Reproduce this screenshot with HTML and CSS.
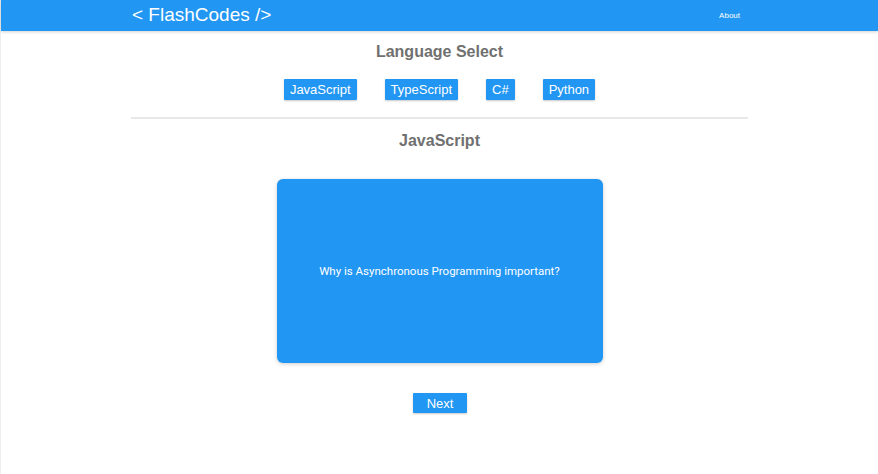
FILE: index.html
```html
<!DOCTYPE html>
<html>
<head>
<meta charset="utf-8">
<link rel="stylesheet" href="styles.css">
</head>
<body>
<div class="page">
  <header class="topbar">
    <div class="topbar-inner">
      <div class="brand">&lt; FlashCodes /&gt;</div>
      <a class="nav-link">About</a>
    </div>
  </header>
  <main class="container">
    <h2 class="section-title">Language Select</h2>
    <div class="lang-row">
      <button class="btn">JavaScript</button>
      <button class="btn">TypeScript</button>
      <button class="btn">C#</button>
      <button class="btn">Python</button>
    </div>
    <div class="divider"></div>
    <h2 class="section-title second">JavaScript</h2>
    <div class="card-wrap">
      <div class="card">Why is Asynchronous Programming important?</div>
    </div>
    <div class="next-row">
      <button class="btn btn-next">Next</button>
    </div>
  </main>
</div>
</body>
</html>
```

FILE: styles.css
```css
html, body {
  margin: 0;
  padding: 0;
  background: #fff;
}
body {
  font-family: "Liberation Sans", Arial, sans-serif;
}
.page {
  min-height: 474px;
  border-left: 1px solid #eeeeee;
  box-sizing: border-box;
}
.topbar {
  height: 31px;
  background: #2196f3;
  box-shadow: 0 1px 3px rgba(0, 0, 0, 0.18);
}
.topbar-inner {
  width: 617px;
  height: 31px;
  margin: 0 auto;
  display: flex;
  align-items: center;
  justify-content: space-between;
  padding: 0 8px 0 1px;
  box-sizing: border-box;
  color: #fff;
}
.brand {
  font-size: 19px;
  line-height: 22px;
  position: relative;
  top: -1px;
}
.nav-link {
  font-size: 8px;
  color: #fff;
}
.container {
  width: 617px;
  margin: 0 auto;
  text-align: center;
}
.section-title {
  margin: 0;
  font-size: 16px;
  line-height: 18px;
  font-weight: bold;
  color: #707070;
  padding-top: 12px;
}
.section-title.second {
  padding-top: 13px;
}
.lang-row {
  display: flex;
  justify-content: center;
  gap: 28px;
  margin-top: 18px;
}
.btn {
  background: #2196f3;
  color: #fff;
  border: none;
  border-radius: 1px;
  font-family: "Liberation Sans", Arial, sans-serif;
  font-size: 13px;
  height: 21px;
  padding: 0 6px;
  box-shadow: 0 1px 2px rgba(0, 0, 0, 0.22);
  cursor: pointer;
}
.divider {
  height: 2px;
  background: #e8e8e8;
  margin-top: 17px;
}
.card-wrap {
  display: flex;
  justify-content: center;
  margin-top: 29px;
}
.card {
  width: 326px;
  height: 184px;
  background: #2196f3;
  border-radius: 6px;
  box-shadow: 0 1px 4px rgba(0, 0, 0, 0.2);
  color: #fff;
  font-family: Roboto, "Liberation Sans", sans-serif;
  font-size: 11.5px;
  display: flex;
  align-items: center;
  justify-content: center;
}
.next-row {
  display: flex;
  justify-content: center;
  margin-top: 30px;
}
.btn-next {
  height: 20px;
  padding: 0 14px;
  font-size: 13px;
  margin-left: 1px;
}
```
